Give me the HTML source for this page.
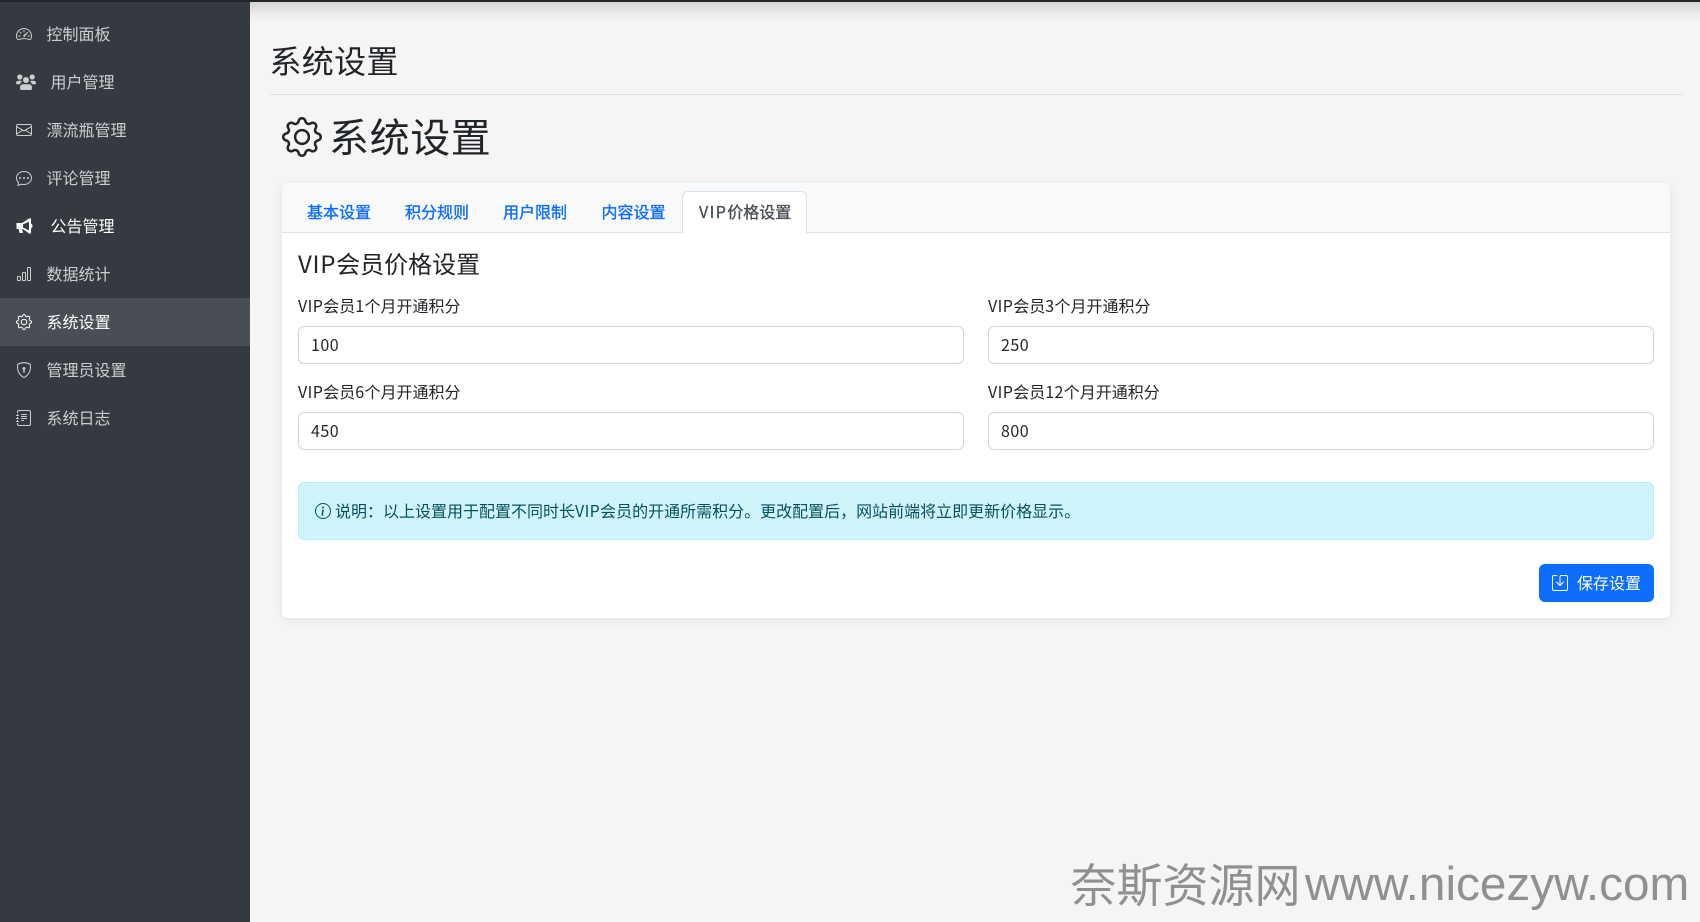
<!DOCTYPE html>
<html lang="zh-CN">
<head>
<meta charset="utf-8">
<title>系统设置</title>
<style>
html,body{margin:0;padding:0;width:1700px;height:922px;overflow:hidden;background:#f5f5f5}
body{position:relative;font-family:"Noto Sans CJK SC","Liberation Sans",sans-serif;font-size:16px;color:#212529}
.a{position:absolute;white-space:nowrap;line-height:24px}
svg{display:block;fill:currentColor}
svg.abs{position:absolute}
#top{position:absolute;left:0;top:0;width:1700px;height:2px;background:#212529;z-index:5}
#shadow{position:absolute;left:250px;top:2px;width:1450px;height:22px;background:linear-gradient(to bottom,rgba(0,0,0,.13) 0,rgba(0,0,0,.09) 25%,rgba(0,0,0,.04) 55%,rgba(0,0,0,.01) 85%,rgba(0,0,0,0) 100%);z-index:2}
#side{position:absolute;left:0;top:0;width:250px;height:922px;background:#343a40;z-index:4}
#side .it{position:absolute;left:0;width:250px;height:48px;color:rgba(255,255,255,.75)}
#side .it.on{background:rgba(255,255,255,.1);color:#fff}
#side .it.w{color:#fff}
#side .it .t{position:absolute;left:46.500px;top:11px;line-height:24px;white-space:nowrap}
#side .it .t.f{left:50.500px}
#side .it svg{position:absolute;left:16px;top:16px}
#card{position:absolute;left:282px;top:183px;width:1388px;height:435px;background:#fff;border-radius:6px;box-shadow:0 2px 10px rgba(0,0,0,.08);overflow:hidden}
#hd{position:absolute;left:0;top:0;width:1388px;height:49px;background:#f8f9fa;border-bottom:1px solid #dee2e6;box-sizing:content-box}
.tab{position:absolute;top:16px;line-height:24px;color:#0d6efd;white-space:nowrap;-webkit-text-stroke:.35px currentColor}
#act{position:absolute;left:400px;top:8px;width:123px;height:41px;background:#fff;border:1px solid #dee2e6;border-bottom:1px solid #fff;border-radius:6px 6px 0 0}
.lb{position:absolute;white-space:nowrap;line-height:24px;color:#212529}
.lb b,.in b,.h b{font-weight:400;letter-spacing:.4px}
.in{position:absolute;box-sizing:border-box;width:666px;height:38px;background:#fff;border:1px solid #ced4da;border-radius:6px;padding:0 12px;line-height:34px;color:#212529;letter-spacing:.5px}
#al{position:absolute;left:298px;top:482px;width:1356px;height:58px;box-sizing:border-box;background:#cff4fc;border:1px solid #b6effb;border-radius:6px;color:#055160}
#btn{position:absolute;left:1539px;top:564px;width:115px;height:38px;background:#0d6efd;border-radius:6px;color:#fff}
</style>
</head>
<body>
<div id="top"></div>
<div id="shadow"></div>

<div id="side">
  <div class="it" style="top:10px">
    <svg width="16" height="16" viewBox="0 0 16 16"><path d="M8 4a.5.5 0 0 1 .5.5V6a.5.5 0 0 1-1 0V4.500A.5.5 0 0 1 8 4zM3.732 5.732a.5.5 0 0 1 .707 0l.915.914a.5.5 0 1 1-.708.708l-.914-.915a.5.5 0 0 1 0-.707zM2 10a.5.5 0 0 1 .5-.5h1.586a.5.5 0 0 1 0 1H2.500A.5.5 0 0 1 2 10zm9.500 0a.5.5 0 0 1 .5-.5h1.500a.5.5 0 0 1 0 1H12a.5.5 0 0 1-.5-.5zm.754-4.246a.389.389 0 0 0-.527-.02L7.547 9.310a.91.91 0 1 0 1.302 1.258l3.434-4.297a.389.389 0 0 0-.029-.518z"/><path fill-rule="evenodd" d="M0 10a8 8 0 1 1 15.547 2.661c-.442 1.253-1.845 1.602-2.932 1.250C11.309 13.488 9.475 13 8 13c-1.474 0-3.310.488-4.615.911-1.087.352-2.490.003-2.932-1.250A7.988 7.988 0 0 1 0 10zm8-7a7 7 0 0 0-6.603 9.329c.203.575.923.876 1.680.63C4.397 12.533 6.358 12 8 12s3.604.532 4.923.96c.757.245 1.477-.056 1.680-.631A7 7 0 0 0 8 3z"/></svg>
    <span class="t">控制面板</span>
  </div>
  <div class="it" style="top:58px">
    <svg width="20" height="16" viewBox="0 0 20 16"><circle cx="3.800" cy="3" r="2.600"/><circle cx="16.200" cy="3" r="2.600"/><circle cx="10" cy="6" r="3"/><path d="M0 9.300C0 7.700 1 6.800 2.300 6.800h2.400c.5 0 1 .2 1.300.4-1 .8-1.700 1.800-1.900 3H.9C.4 10.200 0 9.800 0 9.300zM20 9.300c0-1.600-1-2.500-2.300-2.500h-2.400c-.5 0-1 .2-1.300.4 1 .8 1.700 1.800 1.900 3h3.200c.5 0 .9-.4.9-.9z"/><path d="M7 10.300h6c1.600 0 2.900 1.300 2.900 2.900v1.600c0 .7-.5 1.200-1.200 1.200H5.300c-.7 0-1.200-.5-1.200-1.200v-1.600c0-1.600 1.300-2.900 2.900-2.900z"/></svg>
    <span class="t f">用户管理</span>
  </div>
  <div class="it" style="top:106px">
    <svg width="16" height="16" viewBox="0 0 16 16"><path d="M0 4a2 2 0 0 1 2-2h12a2 2 0 0 1 2 2v8a2 2 0 0 1-2 2H2a2 2 0 0 1-2-2V4Zm2-1a1 1 0 0 0-1 1v.217l7 4.200 7-4.200V4a1 1 0 0 0-1-1H2Zm13 2.383-4.708 2.825L15 11.105V5.383Zm-.034 6.876-5.640-3.471L8 9.583l-1.326-.795-5.640 3.470A1 1 0 0 0 2 13h12a1 1 0 0 0 .966-.741ZM1 11.105l4.708-2.897L1 5.383v5.722Z"/></svg>
    <span class="t">漂流瓶管理</span>
  </div>
  <div class="it" style="top:154px">
    <svg width="16" height="16" viewBox="0 0 16 16"><path d="M5 8a1 1 0 1 1-2 0 1 1 0 0 1 2 0zm4 0a1 1 0 1 1-2 0 1 1 0 0 1 2 0zm3 1a1 1 0 1 0 0-2 1 1 0 0 0 0 2z"/><path d="m2.165 15.803.02-.004c1.830-.363 2.948-.842 3.468-1.105A9.060 9.060 0 0 0 8 15c4.418 0 8-3.134 8-7s-3.582-7-8-7-8 3.134-8 7c0 1.760.743 3.370 1.970 4.600a10.437 10.437 0 0 1-.524 2.318l-.003.011a10.722 10.722 0 0 1-.244.637c-.079.186.074.394.273.362a21.673 21.673 0 0 0 .693-.125zm.8-3.108a1 1 0 0 0-.287-.801C1.618 10.830 1 9.468 1 8c0-3.192 3.004-6 7-6s7 2.808 7 6c0 3.193-3.004 6-7 6a8.060 8.060 0 0 1-2.088-.272 1 1 0 0 0-.711.074c-.387.196-1.240.57-2.634.893a10.970 10.970 0 0 0 .398-2z"/></svg>
    <span class="t">评论管理</span>
  </div>
  <div class="it w" style="top:202px">
    <svg width="18" height="16" viewBox="0 0 18 16"><path fill-rule="evenodd" d="M.5 5H6L13 .5h2v5c1 .5 1.500 1.400 1.500 2.500S16 10 15 10.500v5h-2L6.800 11H6l1 4H3.600l-1-4H.5V5ZM7 6.400v3.200l6 2.700V3.700L7 6.400Z"/></svg>
    <span class="t f">公告管理</span>
  </div>
  <div class="it" style="top:250px">
    <svg width="16" height="16" viewBox="0 0 16 16"><path d="M4 11H2v3h2v-3zm5-4H7v7h2V7zm5-5v12h-2V2h2zm-2-1a1 1 0 0 0-1 1v12a1 1 0 0 0 1 1h2a1 1 0 0 0 1-1V2a1 1 0 0 0-1-1h-2zM6 7a1 1 0 0 1 1-1h2a1 1 0 0 1 1 1v7a1 1 0 0 1-1 1H7a1 1 0 0 1-1-1V7zm-5 4a1 1 0 0 1 1-1h2a1 1 0 0 1 1 1v3a1 1 0 0 1-1 1H2a1 1 0 0 1-1-1v-3z"/></svg>
    <span class="t">数据统计</span>
  </div>
  <div class="it on" style="top:298px">
    <svg width="16" height="16" viewBox="0 0 16 16"><path d="M8 4.754a3.246 3.246 0 1 0 0 6.492 3.246 3.246 0 0 0 0-6.492zM5.754 8a2.246 2.246 0 1 1 4.492 0 2.246 2.246 0 0 1-4.492 0z"/><path d="M9.796 1.343c-.527-1.790-3.065-1.790-3.592 0l-.094.319a.873.873 0 0 1-1.255.52l-.292-.16c-1.640-.892-3.433.902-2.540 2.541l.159.292a.873.873 0 0 1-.52 1.255l-.319.094c-1.790.527-1.790 3.065 0 3.592l.319.094a.873.873 0 0 1 .52 1.255l-.16.292c-.892 1.640.901 3.434 2.541 2.540l.292-.159a.873.873 0 0 1 1.255.52l.094.319c.527 1.790 3.065 1.790 3.592 0l.094-.319a.873.873 0 0 1 1.255-.52l.292.16c1.640.893 3.434-.902 2.540-2.541l-.159-.292a.873.873 0 0 1 .52-1.255l.319-.094c1.790-.527 1.790-3.065 0-3.592l-.319-.094a.873.873 0 0 1-.52-1.255l.16-.292c.893-1.640-.902-3.433-2.541-2.540l-.292.159a.873.873 0 0 1-1.255-.52l-.094-.319zm-2.633.283c.246-.835 1.428-.835 1.674 0l.094.319a1.873 1.873 0 0 0 2.693 1.115l.291-.16c.764-.415 1.600.42 1.184 1.185l-.159.292a1.873 1.873 0 0 0 1.116 2.692l.318.094c.835.246.835 1.428 0 1.674l-.319.094a1.873 1.873 0 0 0-1.115 2.693l.16.291c.415.764-.42 1.600-1.185 1.184l-.291-.159a1.873 1.873 0 0 0-2.693 1.116l-.094.318c-.246.835-1.428.835-1.674 0l-.094-.319a1.873 1.873 0 0 0-2.692-1.115l-.292.16c-.764.415-1.600-.42-1.184-1.185l.159-.291A1.873 1.873 0 0 0 1.945 8.930l-.319-.094c-.835-.246-.835-1.428 0-1.674l.319-.094A1.873 1.873 0 0 0 3.060 4.377l-.16-.292c-.415-.764.42-1.600 1.185-1.184l.292.159a1.873 1.873 0 0 0 2.692-1.115l.094-.319z"/></svg>
    <span class="t">系统设置</span>
  </div>
  <div class="it" style="top:346px">
    <svg width="16" height="16" viewBox="0 0 16 16"><path d="M5.338 1.590a61.440 61.440 0 0 0-2.837.856.481.481 0 0 0-.328.390c-.554 4.157.726 7.190 2.253 9.188a10.725 10.725 0 0 0 2.287 2.233c.346.244.652.420.893.533.120.057.218.095.293.118a.550.550 0 0 0 .101.025.615.615 0 0 0 .100-.025c.076-.023.174-.061.294-.118.240-.113.547-.290.893-.533a10.726 10.726 0 0 0 2.287-2.233c1.527-1.997 2.807-5.031 2.253-9.188a.480.480 0 0 0-.328-.390c-.651-.213-1.750-.560-2.837-.855C9.552 1.290 8.531 1.067 8 1.067c-.530 0-1.552.223-2.662.524zM5.072.560C6.157.265 7.310 0 8 0s1.843.265 2.928.560c1.110.300 2.229.655 2.887.870a1.540 1.540 0 0 1 1.044 1.262c.596 4.477-.787 7.795-2.465 9.990a11.775 11.775 0 0 1-2.517 2.453 7.159 7.159 0 0 1-1.048.625c-.280.132-.581.240-.829.240s-.548-.108-.829-.240a7.158 7.158 0 0 1-1.048-.625 11.777 11.777 0 0 1-2.517-2.453C1.928 10.487.545 7.169 1.141 2.692A1.540 1.540 0 0 1 2.185 1.430 62.456 62.456 0 0 1 5.072.560z"/><path d="M9.500 6.500a1.500 1.500 0 0 1-1 1.415l.385 1.990a.500.500 0 0 1-.491.595h-.788a.500.500 0 0 1-.490-.595l.384-1.990a1.500 1.500 0 1 1 2-1.415z"/></svg>
    <span class="t">管理员设置</span>
  </div>
  <div class="it" style="top:394px">
    <svg width="16" height="16" viewBox="0 0 16 16"><path d="M5 10.500a.5.5 0 0 1 .5-.5h2a.5.5 0 0 1 0 1h-2a.5.5 0 0 1-.5-.5zm0-2a.5.5 0 0 1 .5-.5h5a.5.5 0 0 1 0 1h-5a.5.5 0 0 1-.5-.5zm0-2a.5.5 0 0 1 .5-.5h5a.5.5 0 0 1 0 1h-5a.5.5 0 0 1-.5-.5zm0-2a.5.5 0 0 1 .5-.5h5a.5.5 0 0 1 0 1h-5a.5.5 0 0 1-.5-.5z"/><path d="M3 0h10a2 2 0 0 1 2 2v12a2 2 0 0 1-2 2H3a2 2 0 0 1-2-2v-1h1v1a1 1 0 0 0 1 1h10a1 1 0 0 0 1-1V2a1 1 0 0 0-1-1H3a1 1 0 0 0-1 1v1H1V2a2 2 0 0 1 2-2z"/><path d="M1 5v-.5a.5.5 0 0 1 1 0V5h.5a.5.5 0 0 1 0 1h-2a.5.5 0 0 1 0-1H1zm0 3v-.5a.5.5 0 0 1 1 0V8h.5a.5.5 0 0 1 0 1h-2a.5.5 0 0 1 0-1H1zm0 3v-.5a.5.5 0 0 1 1 0v.5h.5a.5.5 0 0 1 0 1h-2a.5.5 0 0 1 0-1H1z"/></svg>
    <span class="t">系统日志</span>
  </div>
</div>

<div class="a" style="left:269.500px;top:40px;font-size:32px;line-height:40px;letter-spacing:.3px">系统设置</div>
<div style="position:absolute;left:270px;top:94px;width:1413px;height:1px;background:#dee2e6"></div>

<svg class="abs" style="left:282px;top:117px" width="40" height="40" viewBox="0 0 16 16"><path d="M8 4.754a3.246 3.246 0 1 0 0 6.492 3.246 3.246 0 0 0 0-6.492zM5.754 8a2.246 2.246 0 1 1 4.492 0 2.246 2.246 0 0 1-4.492 0z"/><path d="M9.796 1.343c-.527-1.790-3.065-1.790-3.592 0l-.094.319a.873.873 0 0 1-1.255.52l-.292-.16c-1.640-.892-3.433.902-2.540 2.541l.159.292a.873.873 0 0 1-.52 1.255l-.319.094c-1.790.527-1.790 3.065 0 3.592l.319.094a.873.873 0 0 1 .52 1.255l-.16.292c-.892 1.640.901 3.434 2.541 2.540l.292-.159a.873.873 0 0 1 1.255.52l.094.319c.527 1.790 3.065 1.790 3.592 0l.094-.319a.873.873 0 0 1 1.255-.52l.292.16c1.640.893 3.434-.902 2.540-2.541l-.159-.292a.873.873 0 0 1 .52-1.255l.319-.094c1.790-.527 1.790-3.065 0-3.592l-.319-.094a.873.873 0 0 1-.52-1.255l.16-.292c.893-1.640-.902-3.433-2.541-2.540l-.292.159a.873.873 0 0 1-1.255-.52l-.094-.319zm-2.633.283c.246-.835 1.428-.835 1.674 0l.094.319a1.873 1.873 0 0 0 2.693 1.115l.291-.16c.764-.415 1.600.42 1.184 1.185l-.159.292a1.873 1.873 0 0 0 1.116 2.692l.318.094c.835.246.835 1.428 0 1.674l-.319.094a1.873 1.873 0 0 0-1.115 2.693l.16.291c.415.764-.42 1.600-1.185 1.184l-.291-.159a1.873 1.873 0 0 0-2.693 1.116l-.094.318c-.246.835-1.428.835-1.674 0l-.094-.319a1.873 1.873 0 0 0-2.692-1.115l-.292.16c-.764.415-1.600-.42-1.184-1.185l.159-.291A1.873 1.873 0 0 0 1.945 8.930l-.319-.094c-.835-.246-.835-1.428 0-1.674l.319-.094A1.873 1.873 0 0 0 3.060 4.377l-.16-.292c-.415-.764.42-1.600 1.185-1.184l.292.159a1.873 1.873 0 0 0 2.692-1.115l.094-.319z"/></svg>
<div class="a" style="left:329px;top:110px;font-size:40px;line-height:50px;letter-spacing:.6px">系统设置</div>

<div id="card">
  <div id="hd">
    <div id="act"></div>
    <div class="tab" style="left:25px">基本设置</div>
    <div class="tab" style="left:123px">积分规则</div>
    <div class="tab" style="left:221px">用户限制</div>
    <div class="tab" style="left:319.500px">内容设置</div>
    <div class="tab" style="left:417px;color:#495057"><span style="letter-spacing:1.400px">VIP</span>价格设置</div>
  </div>
</div>

<div class="a" style="left:298px;top:248px;font-size:24px;line-height:30px"><span style="letter-spacing:.7px">VIP</span>会员价格设置</div>

<div class="lb" style="left:298px;top:293px"><b>VIP</b>会员<b>1</b>个月开通积分</div>
<div class="in" style="left:298px;top:326px">100</div>
<div class="lb" style="left:988px;top:293px"><b>VIP</b>会员<b>3</b>个月开通积分</div>
<div class="in" style="left:988px;top:326px">250</div>
<div class="lb" style="left:298px;top:379px"><b>VIP</b>会员<b>6</b>个月开通积分</div>
<div class="in" style="left:298px;top:412px">450</div>
<div class="lb" style="left:988px;top:379px"><b>VIP</b>会员<b>12</b>个月开通积分</div>
<div class="in" style="left:988px;top:412px">800</div>

<div id="al">
  <svg class="abs" style="left:16px;top:20px" width="16" height="16" viewBox="0 0 16 16"><path d="M8 15A7 7 0 1 1 8 1a7 7 0 0 1 0 14zm0 1A8 8 0 1 0 8 0a8 8 0 0 0 0 16z"/><path d="m8.930 6.588-2.290.287-.082.402.450.083c.294.070.352.176.288.469l-.738 3.468c-.194.897.105 1.319.808 1.319.545 0 1.178-.252 1.465-.598l.088-.416c-.2.176-.492.246-.686.246-.275 0-.375-.193-.304-.533L8.930 6.588zM9 4.500a1 1 0 1 1-2 0 1 1 0 0 1 2 0z"/></svg>
  <div class="a" style="left:36px;top:15px">说明：以上设置用于配置不同时长<span style="letter-spacing:.35px">VIP</span>会员的开通所需积分。更改配置后，网站前端将立即更新价格显示。</div>
</div>

<div id="btn">
  <svg class="abs" style="left:13px;top:11px" width="16" height="16" viewBox="0 0 16 16"><path d="M2 1a1 1 0 0 0-1 1v12a1 1 0 0 0 1 1h12a1 1 0 0 0 1-1V2a1 1 0 0 0-1-1H9.500a1 1 0 0 0-1 1v7.293l2.646-2.647a.5.5 0 0 1 .708.708l-3.500 3.500a.5.5 0 0 1-.708 0l-3.500-3.500a.5.5 0 1 1 .708-.708L7.500 9.293V2a2 2 0 0 1 2-2H14a2 2 0 0 1 2 2v12a2 2 0 0 1-2 2H2a2 2 0 0 1-2-2V2a2 2 0 0 1 2-2h2.500a.5.5 0 0 1 0 1H2z"/></svg>
  <div class="a" style="left:38px;top:6px">保存设置</div>
</div>

<div class="a" style="left:1070.500px;top:856px;font-size:46px;line-height:54px;color:#909090;font-family:'Noto Sans CJK SC',sans-serif">奈斯资源网</div>
<div class="a" style="left:1305px;top:856px;font-size:47.700px;line-height:58px;color:#909090;font-family:'Liberation Sans',sans-serif">www.nicezyw.com</div>
</body>
</html>
